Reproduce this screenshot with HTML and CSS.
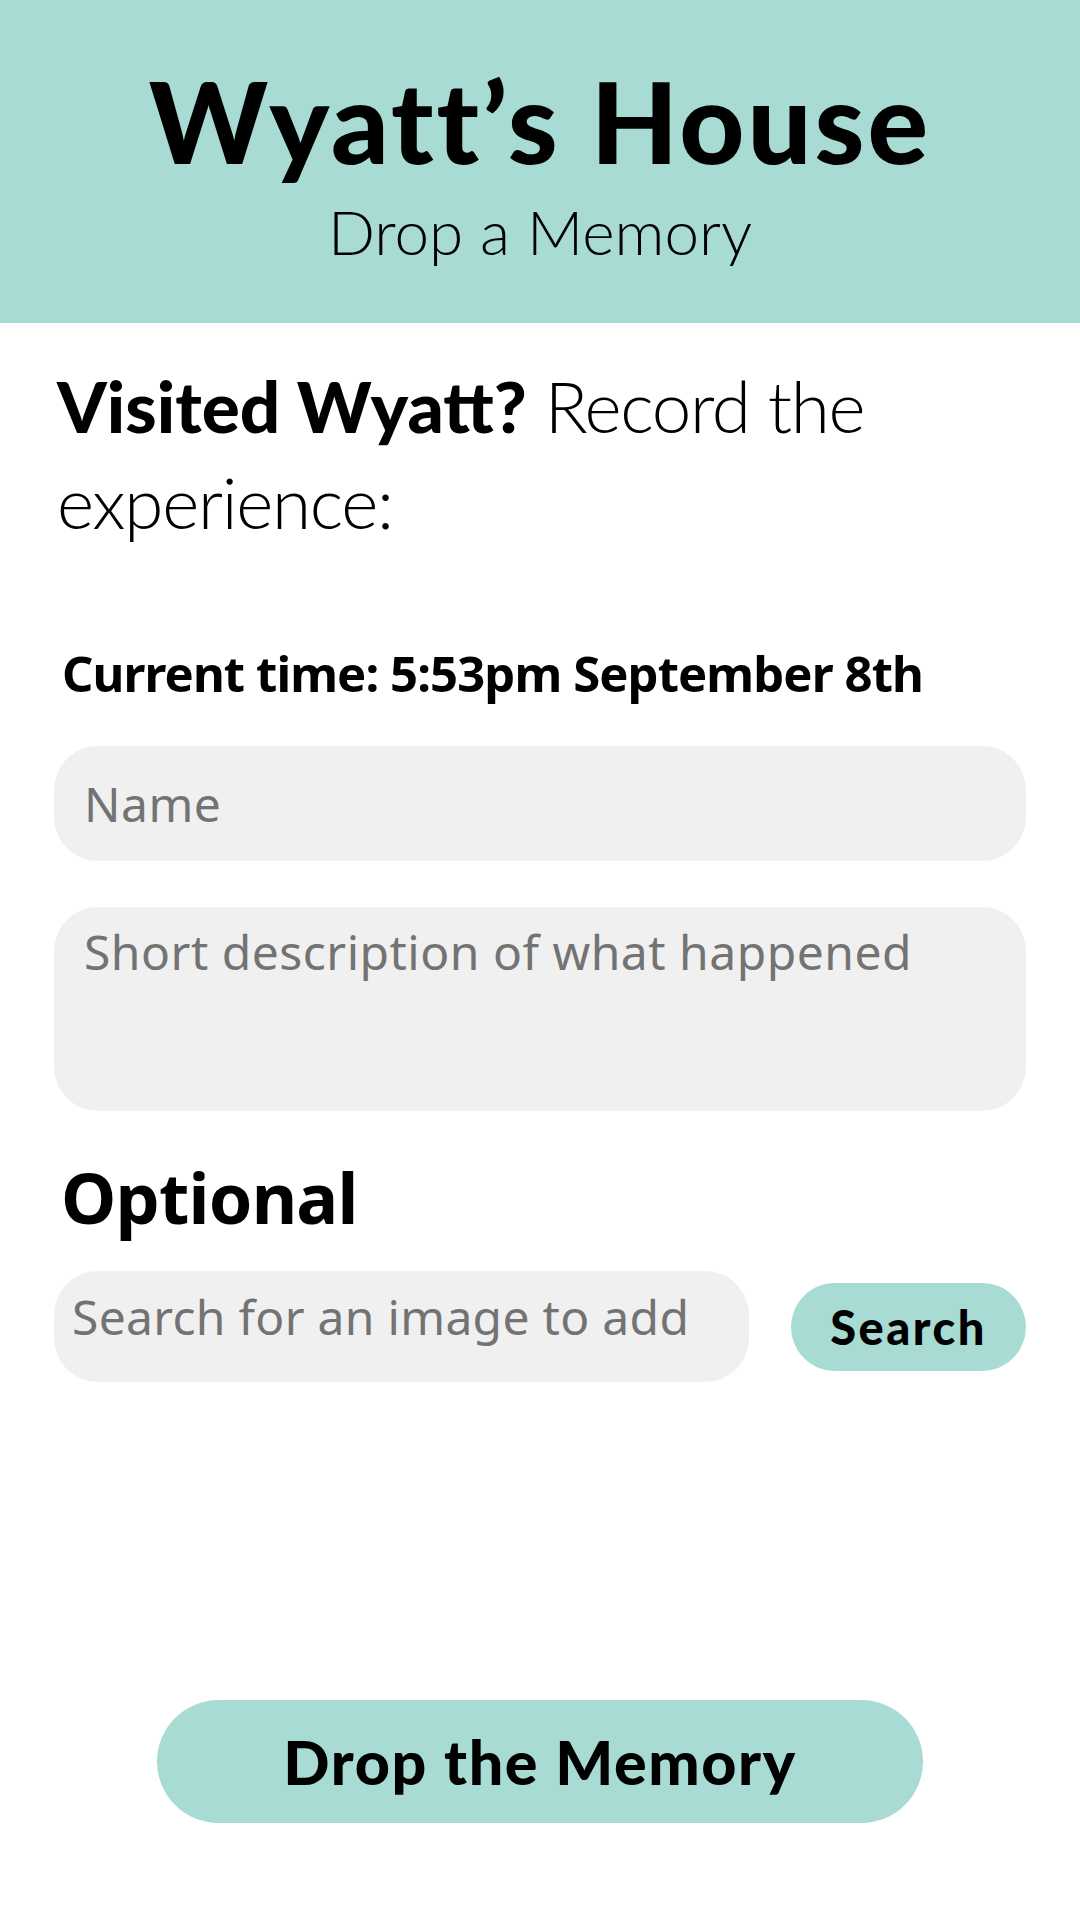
FILE: index.html
```html
<!DOCTYPE html>
<html lang="en">
<head>
<meta charset="utf-8">
<title>Wyatt's House</title>
<link rel="stylesheet" href="styles.css">
</head>
<body>
<header class="header">
  <h1 class="title">Wyatt’s House</h1>
  <p class="subtitle">Drop a Memory</p>
</header>
<main class="main">
  <p class="intro"><strong>Visited Wyatt?</strong> Record the experience:</p>
  <p class="time">Current time: 5:53pm September 8th</p>
  <input class="field name" type="text" placeholder="Name">
  <textarea class="field desc" placeholder="Short description of what happened"></textarea>
  <h2 class="optional">Optional</h2>
  <div class="search-row">
    <input class="field search" type="text" placeholder="Search for an image to add">
    <button class="search-btn" type="button">Search</button>
  </div>
  <div class="drop-wrap">
    <button class="drop-btn" type="button">Drop the Memory</button>
  </div>
</main>
</body>
</html>
```

FILE: styles.css
```css
* { box-sizing: border-box; }
html, body { margin: 0; padding: 0; background: #ffffff; }
body { width: 1080px; height: 1920px; overflow: hidden; font-family: "Lato", "Noto Sans", sans-serif; color: #000; }

.header {
  height: 323px;
  background: #a8dbd4;
  display: flex;
  flex-direction: column;
  align-items: center;
  padding-top: 64px;
}
.title {
  margin: 0;
  font-family: "Lato", sans-serif;
  font-weight: 900;
  font-size: 113px;
  line-height: 113px;
  letter-spacing: 3px;
}
.subtitle {
  margin: 23px 0 0;
  font-family: "Lato", sans-serif;
  font-weight: 300;
  font-size: 62px;
  line-height: 62px;
}

.main {
  display: flex;
  flex-direction: column;
  padding: 0 54px;
}
.intro {
  margin: 35px 0 0 3px;
  font-family: "Lato", sans-serif;
  font-weight: 300;
  font-size: 71px;
  line-height: 96px;
  letter-spacing: -1.3px;
}
.intro strong { font-weight: 900; letter-spacing: 0; }

.time {
  margin: 99px 0 0 8px;
  font-family: "Noto Sans", sans-serif;
  font-weight: 700;
  font-size: 49px;
  line-height: 49px;
  letter-spacing: -0.9px;
}

.field {
  display: block;
  width: 100%;
  border: none;
  outline: none;
  background: #f0f0f0;
  font-family: "Noto Sans", sans-serif;
  font-size: 48px;
  letter-spacing: 0.5px;
  color: #222;
  margin: 0;
}
.field::placeholder { color: #737373; opacity: 1; }

.name {
  margin-top: 48px;
  height: 115px;
  border-radius: 44px;
  padding: 0 30px;
}
.desc {
  margin-top: 46px;
  height: 204px;
  border-radius: 44px;
  padding: 16px 30px 0;
  line-height: 1.2;
  resize: none;
  overflow: hidden;
}

.optional {
  margin: 51px 0 0 7px;
  font-family: "Noto Sans", sans-serif;
  font-weight: 700;
  font-size: 70px;
  line-height: 70px;
  letter-spacing: -0.8px;
}

.search-row {
  margin-top: 39px;
  display: flex;
  align-items: center;
  justify-content: space-between;
}
.search {
  width: 695px;
  height: 111px;
  border-radius: 44px;
  padding: 0 18px 20px;
  letter-spacing: 0.3px;
}
.search-btn {
  width: 235px;
  height: 88px;
  border: none;
  border-radius: 44px;
  background: #a8dbd4;
  font-family: "Lato", sans-serif;
  font-weight: 900;
  font-size: 47px;
  letter-spacing: 2.5px;
  color: #000;
  padding: 0;
}

.drop-wrap {
  margin-top: 318px;
  display: flex;
  justify-content: center;
}
.drop-btn {
  width: 766px;
  height: 123px;
  border: none;
  border-radius: 62px;
  background: #a8dbd4;
  font-family: "Lato", sans-serif;
  font-weight: 900;
  font-size: 61px;
  letter-spacing: 1.6px;
  color: #000;
  padding: 0;
}
```
